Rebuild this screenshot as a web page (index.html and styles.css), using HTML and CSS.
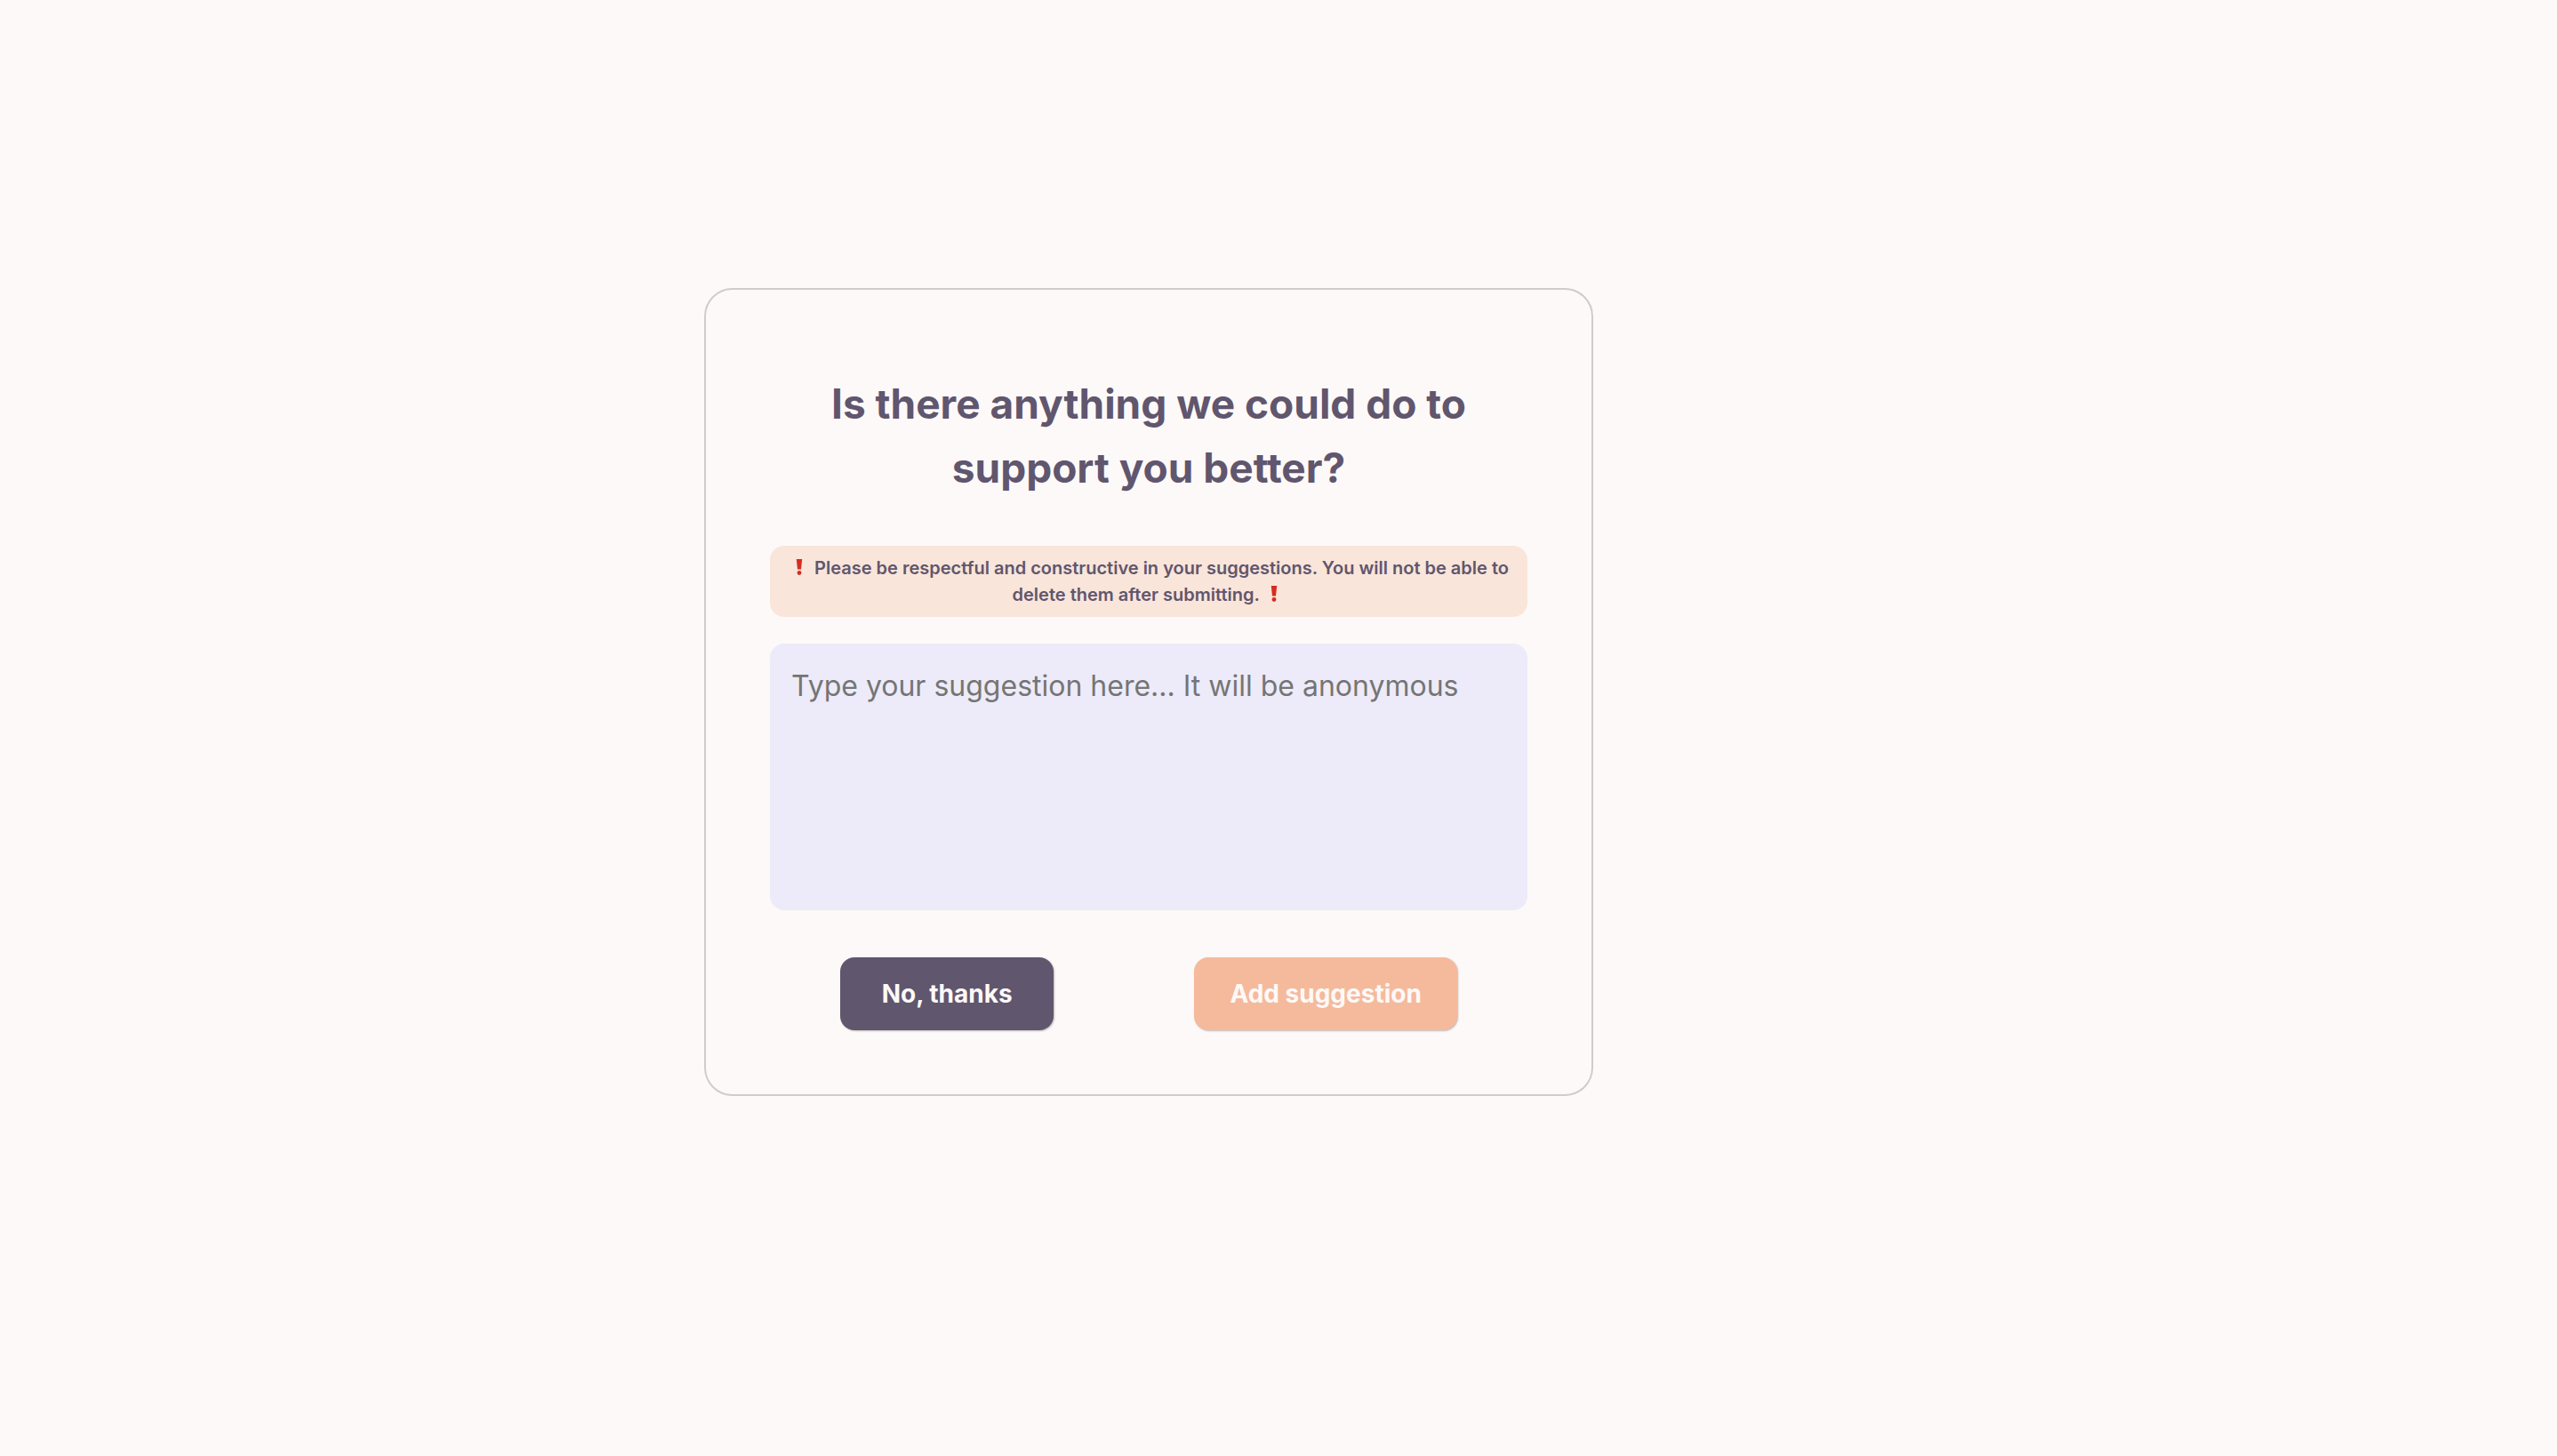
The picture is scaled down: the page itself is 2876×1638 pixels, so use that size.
FILE: index.html
```html
<!DOCTYPE html>
<html lang="en">
<head>
<meta charset="utf-8">
<meta name="viewport" content="width=device-width, initial-scale=1">
<title>Suggestions</title>
<link rel="stylesheet" href="styles.css">
</head>
<body>
<main class="page">
  <form class="card">
    <h1 class="title"><label for="suggestion">Is there anything we could do to support you better?</label></h1>
    <p class="notice"><svg class="mark" viewBox="0 0 24 18" aria-hidden="true"><path d="M8.800 0h6.400l-1.200 11.500h-4z"/><circle cx="12" cy="15.500" r="2.400"/></svg> Please be respectful and constructive in your suggestions. You will not be able to delete them after submitting. <svg class="mark" viewBox="0 0 24 18" aria-hidden="true"><path d="M8.800 0h6.400l-1.200 11.500h-4z"/><circle cx="12" cy="15.500" r="2.400"/></svg></p>
    <textarea class="field" id="suggestion" placeholder="Type your suggestion here... It will be anonymous"></textarea>
    <div class="actions">
      <button class="button button-dismiss" type="button">No, thanks</button>
      <button class="button button-submit" type="submit">Add suggestion</button>
    </div>
  </form>
</main>
</body>
</html>
```
FILE: styles.css
```css
* {
  box-sizing: border-box;
}

body {
  margin: 0;
  background: #fdf9f8;
  color: #60566e;
  font-family: Inter, "Liberation Sans", sans-serif;
}

.page {
  display: flex;
  align-items: center;
  justify-content: center;
  min-height: 100vh;
  padding: 0 292px 82px 0;
}

.card {
  width: 100%;
  max-width: 1000px;
  padding: 72px;
  border: 2px solid #d0cccb;
  border-radius: 32px;
}

.title {
  margin: 20px 0 52px;
  font-size: 46px;
  font-weight: 700;
  line-height: 72px;
  text-align: center;
}

.notice {
  margin: 0 0 30px;
  padding: 10px 20px;
  border-radius: 16px;
  background: #f9e5da;
  font-size: 20px;
  font-weight: 600;
  line-height: 30px;
  text-align: center;
}

.mark {
  width: 24px;
  height: 18px;
  vertical-align: -1px;
  fill: #d62c20;
}

.field {
  display: block;
  width: 100%;
  height: 300px;
  padding: 24px;
  border: 0;
  border-radius: 16px;
  outline: 0;
  background: #edebf9;
  color: inherit;
  font: 32px/48px Inter, "Liberation Sans", sans-serif;
  resize: none;
}

.field::placeholder {
  color: #757575;
  opacity: 1;
}

.actions {
  display: flex;
  justify-content: space-around;
  margin-top: 53px;
}

.button {
  min-width: 240px;
  padding: 20px 40px;
  border: 0;
  border-radius: 16px;
  box-shadow: 1px 1px 2px rgba(0, 0, 0, 0.25);
  color: #fdf9f8;
  font: 700 28px/42px Inter, "Liberation Sans", sans-serif;
}

.button-dismiss {
  background: #60566e;
}

.button-submit {
  background: #f5ba9c;
}
```
